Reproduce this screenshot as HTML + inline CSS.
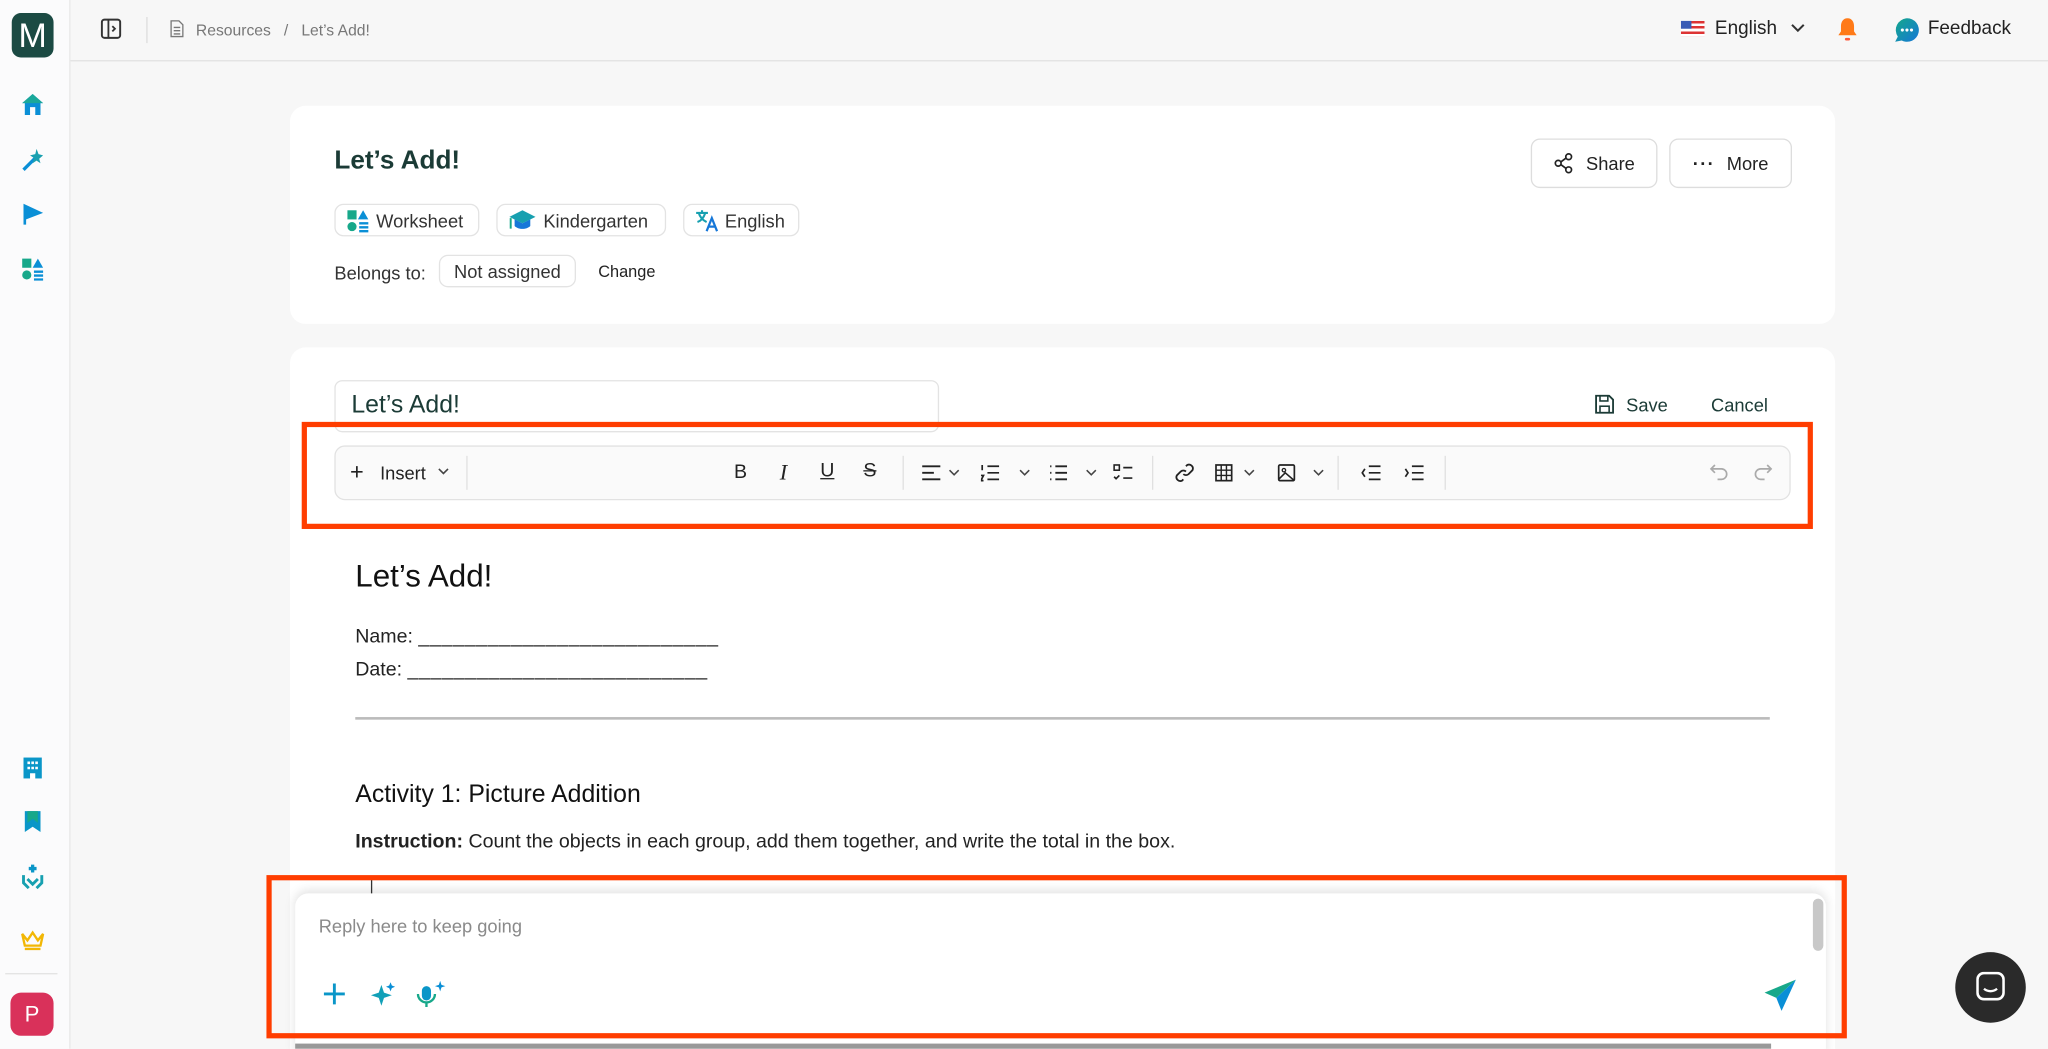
<!DOCTYPE html>
<html><head><meta charset="utf-8">
<style>
html,body{margin:0;padding:0;width:2048px;height:1049px;overflow:hidden;background:#f7f7f7;}
#w{position:absolute;left:0;top:0;width:1568px;height:803px;overflow:hidden;transform:scale(1.30612);transform-origin:0 0;font-family:"Liberation Sans",sans-serif;color:#222;background:#f7f7f7;}
.a{position:absolute;}
.side{left:0;top:0;width:53px;height:803px;background:#fbfbfc;border-right:1px solid #e8e8e8;}
.top{left:54px;top:0;width:1514px;height:46px;background:#f7f7f7;border-bottom:1px solid #e2e2e2;}
.card{background:#fff;border-radius:12px;}
.chip{border:1px solid #e3e3e3;border-radius:7px;height:25px;font-size:14px;display:flex;align-items:center;gap:5px;padding:0 8px;box-sizing:border-box;color:#333;}
.btn{border:1px solid #ddd;border-radius:7px;background:#fff;font-size:14px;display:flex;align-items:center;justify-content:center;gap:9px;box-sizing:border-box;color:#222;}
.red{border:4px solid #ff3d00;box-sizing:border-box;}
.tb svg{position:absolute;}
</style></head><body><div id="w">
<div class="a side">
 <div class="a" style="left:9px;top:10px;width:32px;height:34px;background:#1b4a43;border-radius:7px;color:#fff;font-size:26px;text-align:center;line-height:34px;">M</div>
 <svg class="a" style="left:16px;top:71px" width="18" height="18" viewBox="0 0 18 18"><path d="M9 1 L17 8 L15 8 L15 17 L11 17 L11 11 L7 11 L7 17 L3 17 L3 8 L1 8Z" fill="#0a8fd6"/><path d="M9 1 L17 8 L1 8Z" fill="#1aa89a"/></svg>
 <svg class="a" style="left:16px;top:113px" width="18" height="18" viewBox="0 0 18 18"><path d="M2 17 L11 8" stroke="#0a8fd6" stroke-width="2.5"/><path d="M12 1 L13.5 5 L17 6 L14 8.5 L15 12 L12 10 L9 12 L10 8 L7 6 L11 5Z" fill="#1aa0b0"/></svg>
 <svg class="a" style="left:17px;top:155px" width="17" height="18" viewBox="0 0 17 18"><path d="M1 1 L16 8 L3 13 L3 17 L1 17Z" fill="#0a8fd6"/></svg>
 <svg class="a" style="left:16px;top:197px" width="18" height="18" viewBox="0 0 18 18"><rect x="1" y="1" width="7" height="7" fill="#17a88a"/><path d="M13 1 L17 8 L9 8Z" fill="#0a8fd6"/><circle cx="4.5" cy="13.5" r="3.5" fill="#17a88a"/><path d="M10 11h7M10 14h7M10 17h7" stroke="#0a8fd6" stroke-width="1.8"/></svg>
 <svg class="a" style="left:17px;top:579px" width="16" height="18" viewBox="0 0 16 18"><rect x="1" y="1" width="14" height="16" fill="#0a96c8"/><path d="M4 4h2v2H4zM10 4h2v2h-2zM4 8h2v2H4zM10 8h2v2h-2zM7 4h2v2H7zM7 8h2v2H7zM6 13h4v4H6z" fill="#fff"/></svg>
 <svg class="a" style="left:18px;top:620px" width="14" height="18" viewBox="0 0 14 18"><path d="M1 1h12v16l-6-4-6 4z" fill="#0a96c8"/><path d="M3 1h8v9l-4-3-4 3z" fill="#17a88a"/></svg>
 <svg class="a" style="left:16px;top:661px" width="18" height="20" viewBox="0 0 18 20"><path d="M9 1v6M6 4h6" stroke="#0a96c8" stroke-width="2.5"/><path d="M2 9 L2 15 L6 19 M16 9 L16 15 L12 19 M5 12 L9 16 L13 12" stroke="#17a0b0" stroke-width="2.2" fill="none"/></svg>
 <svg class="a" style="left:16px;top:712px" width="18" height="16" viewBox="0 0 18 16"><path d="M1 3 L5 8 L9 2 L13 8 L17 3 L15 12 L3 12Z" fill="none" stroke="#f2b705" stroke-width="1.8"/><path d="M3 14.5h12" stroke="#f2b705" stroke-width="1.8"/></svg>
 <div class="a" style="left:4px;top:745px;width:40px;height:1px;background:#e2e2e2"></div>
 <div class="a" style="left:8px;top:760px;width:33px;height:33px;background:#d9315a;border-radius:8px;color:#fff;font-size:17px;text-align:center;line-height:33px;">P</div>
</div>
<div class="a top">
 <svg class="a" style="left:23px;top:14px" width="16" height="16" viewBox="0 0 16 16"><rect x="1" y="1" width="14" height="14" rx="2" fill="none" stroke="#333" stroke-width="1.5"/><path d="M6 1v14M9 6l2 2-2 2" stroke="#333" stroke-width="1.4" fill="none"/></svg>
 <div class="a" style="left:58px;top:13px;width:1px;height:20px;background:#ddd"></div>
 <svg class="a" style="left:76px;top:15px" width="11" height="14" viewBox="0 0 11 14"><path d="M1 1h6l3 3v9H1z M3 6h5M3 8.5h5M3 11h5" fill="none" stroke="#777" stroke-width="1"/></svg>
 <div class="a" style="left:96px;top:16px;font-size:12px;color:#777;">Resources&nbsp;&nbsp;&nbsp;/&nbsp;&nbsp;&nbsp;Let’s Add!</div>
 <div class="a" style="left:1233px;top:16px;width:18px;height:12px;background:repeating-linear-gradient(#d33 0 2px,#fff 2px 4px);"><div style="width:8px;height:6px;background:#3a5bb5"></div></div>
 <div class="a" style="left:1259px;top:14px;font-size:14.5px;color:#222;">English</div>
 <svg class="a" style="left:1317px;top:18px" width="11" height="8" viewBox="0 0 11 8"><path d="M1 1l4.5 4.5L10 1" stroke="#333" stroke-width="1.6" fill="none"/></svg>
 <svg class="a" style="left:1352px;top:13px" width="17" height="19" viewBox="0 0 17 19"><path d="M8.5 1C5 1 3.5 4 3.5 7v4L1.5 14h14l-2-3V7C13.5 4 12 1 8.5 1z" fill="#ff7a18"/><rect x="6.5" y="16" width="4" height="2" rx="1" fill="#ff5a3a"/></svg>
 <svg class="a" style="left:1396px;top:13px" width="20" height="20" viewBox="0 0 20 20"><defs><linearGradient id="g" x1="0" y1="0" x2="1" y2="1"><stop offset="0" stop-color="#13a88a"/><stop offset="1" stop-color="#1677d8"/></linearGradient></defs><path d="M10 1a9 9 0 1 1-4 17L1 19l2-4A9 9 0 0 1 10 1z" fill="url(#g)"/><circle cx="6.5" cy="10" r="1.2" fill="#fff"/><circle cx="10" cy="10" r="1.2" fill="#fff"/><circle cx="13.5" cy="10" r="1.2" fill="#fff"/></svg>
 <div class="a" style="left:1422px;top:14px;font-size:14.5px;color:#222;">Feedback</div>
</div>

<div class="a card" style="left:222px;top:81px;width:1183px;height:167px;">
 <div class="a" style="left:34px;top:31px;font-size:20px;font-weight:bold;color:#1b3b36;">Let’s Add!</div>
 <div class="a chip" style="left:34px;top:75px;width:111px;"><svg width="18" height="18" viewBox="0 0 18 18"><rect x="1" y="1" width="7" height="7" fill="#17a88a"/><path d="M13 1 L17 8 L9 8Z" fill="#0a8fd6"/><circle cx="4.5" cy="13.5" r="3.5" fill="#17a88a"/><path d="M10 11h7M10 14h7M10 17h7" stroke="#0a8fd6" stroke-width="1.8"/></svg>Worksheet</div>
 <div class="a chip" style="left:158px;top:75px;width:130px;"><svg width="22" height="18" viewBox="0 0 22 18"><path d="M1 6 L11 1 L21 6 L11 11Z" fill="#17a0b0"/><path d="M5 8v5c3 3 9 3 12 0V8l-6 3z" fill="#1677d8"/><path d="M2 7v8" stroke="#17a88a" stroke-width="1.5"/></svg>Kindergarten</div>
 <div class="a chip" style="left:301px;top:75px;width:89px;"><svg width="18" height="18" viewBox="0 0 18 18"><path d="M1 3h9M5.5 1v2M3 3c1 4 4 6 6 7M8 3c-1 3-3 6-6 7" stroke="#17a0b0" stroke-width="1.6" fill="none"/><path d="M9 17l4-10 4 10M10.5 13.5h5" stroke="#1677d8" stroke-width="1.7" fill="none"/></svg>English</div>
 <div class="a" style="left:34px;top:120px;font-size:14px;color:#333;">Belongs to:</div>
 <div class="a chip" style="left:114px;top:114px;width:105px;justify-content:center;">Not assigned</div>
 <div class="a" style="left:236px;top:120px;font-size:12.5px;color:#222;">Change</div>
 <div class="a btn" style="left:950px;top:25px;width:97px;height:38px;"><svg width="16" height="16" viewBox="0 0 16 16"><circle cx="12" cy="3" r="2.2" fill="none" stroke="#222" stroke-width="1.3"/><circle cx="4" cy="8" r="2.2" fill="none" stroke="#222" stroke-width="1.3"/><circle cx="12" cy="13" r="2.2" fill="none" stroke="#222" stroke-width="1.3"/><path d="M6 7l4-3M6 9l4 3" stroke="#222" stroke-width="1.3"/></svg>Share</div>
 <div class="a btn" style="left:1056px;top:25px;width:94px;height:38px;"><span style="font-weight:bold;letter-spacing:1px;">···</span>More</div>
</div>

<div class="a card" style="left:222px;top:266px;width:1183px;height:560px;">
 <div class="a" style="left:34px;top:25px;width:463px;height:40px;border:1px solid #e3e3e3;border-radius:6px;box-sizing:border-box;font-size:19px;color:#1b3b36;padding:8px 12px;">Let’s Add!</div>
 <svg class="a" style="left:999px;top:36px" width="15" height="15" viewBox="0 0 15 15"><path d="M1 1h10l3 3v10H1z" fill="none" stroke="#1b3b36" stroke-width="1.4"/><rect x="4" y="1" width="6" height="4" fill="none" stroke="#1b3b36" stroke-width="1.2"/><rect x="4" y="9" width="7" height="5" fill="none" stroke="#1b3b36" stroke-width="1.2"/></svg>
 <div class="a" style="left:1023px;top:36px;font-size:14px;color:#1b3b36;">Save</div>
 <div class="a" style="left:1088px;top:36px;font-size:14px;color:#1b3b36;">Cancel</div>
 <div class="a" style="left:34px;top:75px;width:1115px;height:42px;background:#fafafa;border:1px solid #e2e2e2;border-radius:8px;box-sizing:border-box;"></div>
 <div class="a tb" style="left:34px;top:75px;width:1115px;height:42px;">
  <div class="a" style="left:12px;top:10px;font-size:18px;color:#222;">+</div>
  <div class="a" style="left:35px;top:13px;font-size:14px;color:#222;">Insert</div>
  <svg style="left:79px;top:17px" width="9" height="6" viewBox="0 0 9 6"><path d="M1 1l3.5 3.5L8 1" stroke="#444" stroke-width="1.2" fill="none"/></svg>
  <div class="a" style="left:101px;top:8px;width:1px;height:26px;background:#e0e0e0"></div>
  <div class="a" style="left:306px;top:12px;font-size:15px;color:#222;">B</div>
  <div class="a" style="left:341px;top:11px;font-size:17px;font-style:italic;font-family:'Liberation Serif',serif;color:#222;">I</div>
  <div class="a" style="left:372px;top:11px;font-size:15px;text-decoration:underline;color:#222;">U</div>
  <div class="a" style="left:405px;top:11px;font-size:15px;text-decoration:line-through;color:#222;">S</div>
  <div class="a" style="left:435px;top:8px;width:1px;height:26px;background:#e0e0e0"></div>
  <svg style="left:450px;top:15px" width="14" height="12" viewBox="0 0 14 12"><path d="M0 1h14M0 6h9M0 11h14" stroke="#222" stroke-width="1.4"/></svg>
  <svg style="left:470px;top:18px" width="9" height="6" viewBox="0 0 9 6"><path d="M1 1l3.5 3.5L8 1" stroke="#444" stroke-width="1.2" fill="none"/></svg>
  <svg style="left:495px;top:14px" width="14" height="14" viewBox="0 0 14 14"><path d="M5 2h9M5 7h9M5 12h9M1 1v4M0 9h2L0 13h2" stroke="#222" stroke-width="1.3" fill="none"/></svg>
  <svg style="left:524px;top:18px" width="9" height="6" viewBox="0 0 9 6"><path d="M1 1l3.5 3.5L8 1" stroke="#444" stroke-width="1.2" fill="none"/></svg>
  <svg style="left:547px;top:15px" width="14" height="12" viewBox="0 0 14 12"><path d="M5 1h9M5 6h9M5 11h9M1 1h1M1 6h1M1 11h1" stroke="#222" stroke-width="1.4"/></svg>
  <svg style="left:575px;top:18px" width="9" height="6" viewBox="0 0 9 6"><path d="M1 1l3.5 3.5L8 1" stroke="#444" stroke-width="1.2" fill="none"/></svg>
  <svg style="left:596px;top:14px" width="15" height="14" viewBox="0 0 15 14"><rect x="1" y="1" width="4" height="4" fill="none" stroke="#222" stroke-width="1.2"/><path d="M8 3h7M8 11h7M1 10l1.5 1.5L5 9" stroke="#222" stroke-width="1.3" fill="none"/></svg>
  <div class="a" style="left:626px;top:8px;width:1px;height:26px;background:#e0e0e0"></div>
  <svg style="left:643px;top:13px" width="16" height="16" viewBox="0 0 16 16"><path d="M7 9a3 3 0 0 0 4 0l3-3a3 3 0 0 0-4-4l-1 1M9 7a3 3 0 0 0-4 0l-3 3a3 3 0 0 0 4 4l1-1" stroke="#222" stroke-width="1.4" fill="none"/></svg>
  <svg style="left:674px;top:14px" width="14" height="14" viewBox="0 0 14 14"><rect x="1" y="1" width="12" height="12" fill="none" stroke="#222" stroke-width="1.3"/><path d="M1 5h12M1 9h12M5 1v12M9 1v12" stroke="#222" stroke-width="1.1"/></svg>
  <svg style="left:696px;top:18px" width="9" height="6" viewBox="0 0 9 6"><path d="M1 1l3.5 3.5L8 1" stroke="#444" stroke-width="1.2" fill="none"/></svg>
  <svg style="left:722px;top:14px" width="14" height="14" viewBox="0 0 14 14"><rect x="1" y="1" width="12" height="12" rx="1" fill="none" stroke="#222" stroke-width="1.3"/><circle cx="5" cy="5" r="1.3" fill="none" stroke="#222"/><path d="M1 12l5-5 7 6" stroke="#222" stroke-width="1.2" fill="none"/></svg>
  <svg style="left:749px;top:18px" width="9" height="6" viewBox="0 0 9 6"><path d="M1 1l3.5 3.5L8 1" stroke="#444" stroke-width="1.2" fill="none"/></svg>
  <div class="a" style="left:768px;top:8px;width:1px;height:26px;background:#e0e0e0"></div>
  <svg style="left:786px;top:15px" width="15" height="12" viewBox="0 0 15 12"><path d="M6 1h9M6 6h9M6 11h9M3 3L1 6l2 3" stroke="#222" stroke-width="1.3" fill="none"/></svg>
  <svg style="left:819px;top:15px" width="15" height="12" viewBox="0 0 15 12"><path d="M6 1h9M6 6h9M6 11h9M1 3l2 3-2 3" stroke="#222" stroke-width="1.3" fill="none"/></svg>
  <div class="a" style="left:850px;top:8px;width:1px;height:26px;background:#e0e0e0"></div>
  <svg style="left:1053px;top:14px" width="14" height="14" viewBox="0 0 14 14"><path d="M4 1L1 4l3 3M1 4h8a4 4 0 0 1 0 8H6" stroke="#aaa" stroke-width="1.3" fill="none"/></svg>
  <svg style="left:1087px;top:14px" width="14" height="14" viewBox="0 0 14 14"><path d="M10 1l3 3-3 3M13 4H5a4 4 0 0 0 0 8h3" stroke="#aaa" stroke-width="1.3" fill="none"/></svg>
 </div>
 <div class="a" style="left:50px;top:162px;font-size:24px;color:#111;">Let’s Add!</div>
 <div class="a" style="left:50px;top:209px;font-size:15px;color:#222;line-height:25px;">Name: <span style="letter-spacing:0.5px">__________________________</span><br>Date: <span style="letter-spacing:0.5px">__________________________</span></div>
 <div class="a" style="left:50px;top:283px;width:1083px;height:2px;background:#bbb;"></div>
 <div class="a" style="left:50px;top:332px;font-size:19px;color:#111;">Activity 1: Picture Addition</div>
 <div class="a" style="left:50px;top:370px;font-size:15px;color:#222;"><b>Instruction:</b> Count the objects in each group, add them together, and write the total in the box.</div>
 <div class="a" style="left:62px;top:405px;width:1px;height:14px;background:#333;"></div>
</div>

<div class="a" style="left:226px;top:684px;width:1172px;height:130px;background:#fff;border-radius:10px;box-shadow:0 -2px 8px rgba(0,0,0,0.12);"></div>
<div class="a" style="left:226px;top:799px;width:1130px;height:4px;background:#999;"></div>
<div class="a" style="left:1388px;top:688px;width:8px;height:40px;background:#c8c8c8;border-radius:4px;"></div>
<div class="a" style="left:244px;top:701px;font-size:14px;color:#8a8a8a;">Reply here to keep going</div>
<svg class="a" style="left:247px;top:752px" width="18" height="18" viewBox="0 0 18 18"><path d="M9 1v16M1 9h16" stroke="#0a96c8" stroke-width="2.2"/></svg>
<svg class="a" style="left:283px;top:751px" width="21" height="20" viewBox="0 0 21 20"><path d="M9 3 L11 9 L17 11 L11 13 L9 19 L7 13 L1 11 L7 9Z" fill="#12a0b8"/><path d="M16 1 L17 3.5 L19.5 4.5 L17 5.5 L16 8 L15 5.5 L12.5 4.5 L15 3.5Z" fill="#0a8fd6"/></svg>
<svg class="a" style="left:319px;top:750px" width="24" height="22" viewBox="0 0 24 22"><rect x="4" y="5" width="7" height="11" rx="3.5" fill="#0a96c8"/><path d="M1 11a6.5 6.5 0 0 0 13 0M7.5 17v4" stroke="#17a88a" stroke-width="1.8" fill="none"/><path d="M18 1 L19 4 L22 5 L19 6 L18 9 L17 6 L14 5 L17 4Z" fill="#0a8fd6"/></svg>
<svg class="a" style="left:1350px;top:749px" width="26" height="26" viewBox="0 0 26 26"><path d="M25 1 L1 11 L10 15Z" fill="#17a88a"/><path d="M25 1 L10 15 L14 25Z" fill="#0a8fd6"/></svg>
<div class="a red" style="left:231px;top:323px;width:1157px;height:82px;"></div>
<div class="a red" style="left:204px;top:670px;width:1210px;height:125px;"></div>
<div class="a" style="left:1497px;top:729px;width:54px;height:54px;border-radius:50%;background:#2a2a2a;"></div>
<svg class="a" style="left:1513px;top:744px" width="22" height="24" viewBox="0 0 22 24"><rect x="1" y="1" width="20" height="20" rx="5" fill="none" stroke="#fff" stroke-width="2"/><path d="M6 13c3 2.5 7 2.5 10 0" stroke="#fff" stroke-width="1.8" fill="none"/></svg>
</div></body></html>
